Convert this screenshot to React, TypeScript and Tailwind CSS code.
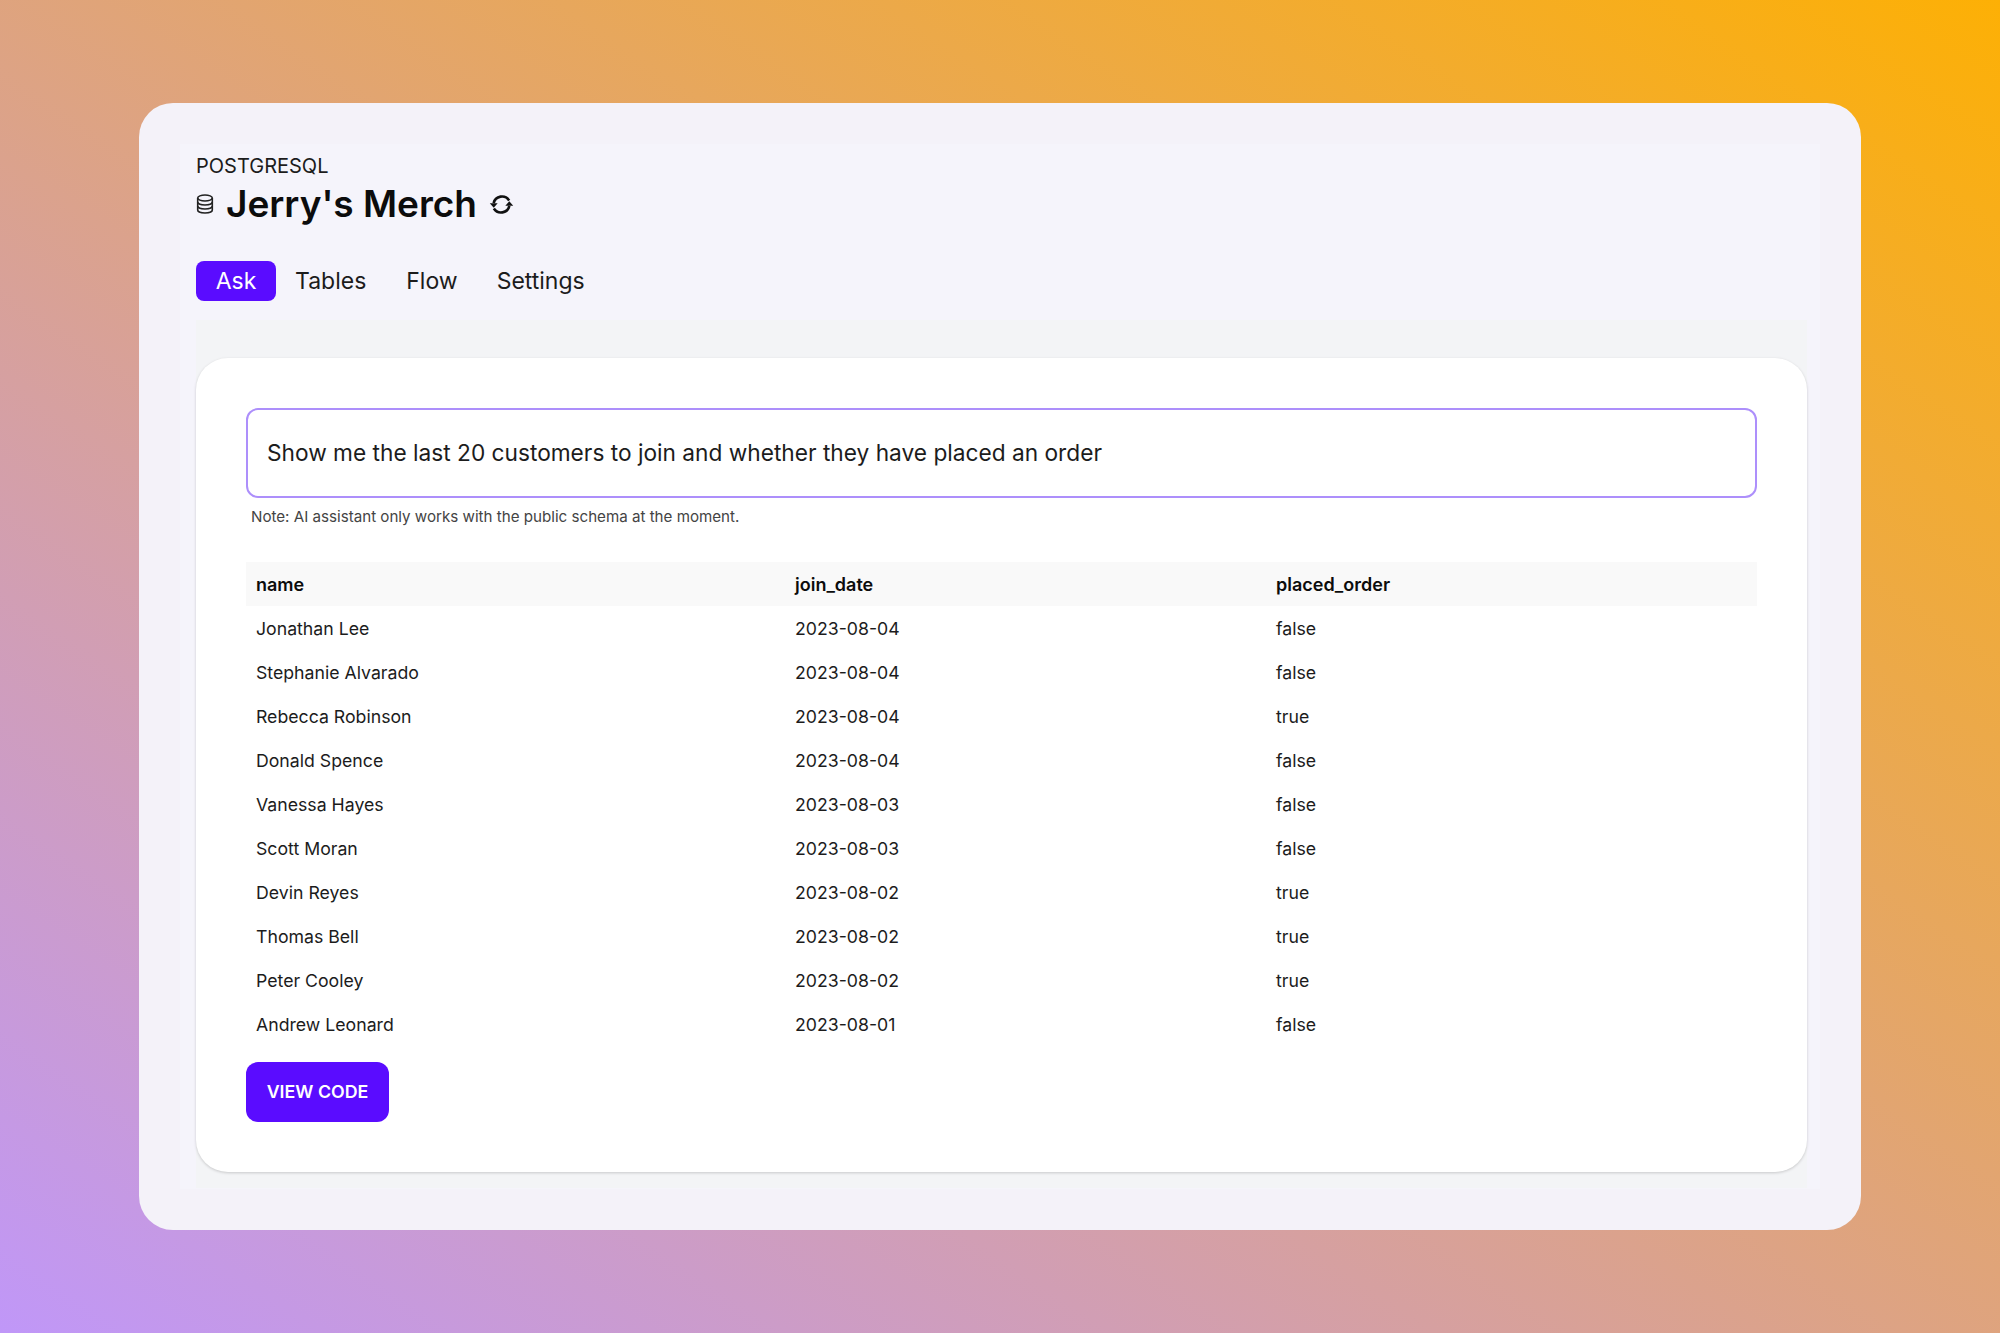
import React from "react";

const rows = [
  ["Jonathan Lee", "2023-08-04", "false"],
  ["Stephanie Alvarado", "2023-08-04", "false"],
  ["Rebecca Robinson", "2023-08-04", "true"],
  ["Donald Spence", "2023-08-04", "false"],
  ["Vanessa Hayes", "2023-08-03", "false"],
  ["Scott Moran", "2023-08-03", "false"],
  ["Devin Reyes", "2023-08-02", "true"],
  ["Thomas Bell", "2023-08-02", "true"],
  ["Peter Cooley", "2023-08-02", "true"],
  ["Andrew Leonard", "2023-08-01", "false"],
];

function DbIcon() {
  return (
    <svg width="18" height="20" viewBox="0 0 18 20" fill="none" stroke="#222" strokeWidth="1.6">
      <ellipse cx="9" cy="4" rx="7.3" ry="3" />
      <path d="M1.7 4v12c0 1.7 3.3 3 7.3 3s7.3-1.3 7.3-3V4" />
      <path d="M1.7 8c0 1.7 3.3 3 7.3 3s7.3-1.3 7.3-3" />
      <path d="M1.7 12c0 1.7 3.3 3 7.3 3s7.3-1.3 7.3-3" />
    </svg>
  );
}

function SyncIcon() {
  return (
    <svg width="27" height="27" viewBox="0 0 24 24" fill="none" stroke="#111" strokeWidth="2.3" strokeLinecap="butt" strokeLinejoin="round">
      <path d="M18.8 8.4A7.6 7.6 0 0 0 5 10.8" />
      <path d="M5.2 15.6A7.6 7.6 0 0 0 19 13.2" />
      <path d="M1.6 10.8h7L5.1 14.8z" fill="#111" stroke="none" />
      <path d="M15.4 13.2h7l-3.5-4z" fill="#111" stroke="none" />
    </svg>
  );
}

export default function App() {
  return (
    <div
      className="w-[2000px] h-[1333px] pt-[103px] pl-[139px] bg-[linear-gradient(to_top_right,#c097f8,#fdb005)] overflow-hidden"
      style={{ fontFamily: "Inter, sans-serif" }}
    >
      <div className="w-[1722px] h-[1127px] rounded-[34px] bg-[#f4f2f9] pt-[41px] pl-[41px]">
        <div className="w-[1640px] h-[1045px] bg-[#f5f4fb] pl-[16px] pt-[10px]">
          <div className="h-[24px] flex items-center text-[20px] leading-[24px] text-[#1c1c1c]">POSTGRESQL</div>
          <div className="flex items-center h-[50px] mt-[1px]">
            <DbIcon />
            <h1 className="ml-[12px] text-[37px] leading-[50px] font-semibold text-[#0c0c0c]">Jerry's Merch</h1>
            <div className="ml-[11px]"><SyncIcon /></div>
          </div>
          <div className="flex items-center mt-[32px] text-[23px] leading-[40px] text-[#1c1c1c]">
            <div className="w-[80px] h-[40px] rounded-[8px] bg-[#5a0cff] text-white flex items-center justify-center">Ask</div>
            <div className="pl-[19px] pr-[20px]">Tables</div>
            <div className="pl-[20px] pr-[19px]">Flow</div>
            <div className="px-[20px]">Settings</div>
          </div>
          <div className="w-[1611px] h-[868px] mt-[19px] bg-[#f3f4f6] pt-[38px]">
            <div className="h-[814px] rounded-[32px] bg-white shadow-[0_1px_3px_rgba(0,0,0,0.18)] pt-[50px] px-[50px]">
              <div className="h-[90px] rounded-[12px] border-[2px] border-[#ad8ffb] flex items-center pl-[19px] text-[22.7px] text-[#1c1c1c]">
                Show me the last 20 customers to join and whether they have placed an order
              </div>
              <p className="mt-[9px] ml-[5px] text-[15.15px] leading-[20px] text-[#444444]">
                Note: AI assistant only works with the public schema at the moment.
              </p>
              <div className="mt-[35px] text-[17.7px] leading-[24px] text-[#1c1c1c]">
                <div className="grid grid-cols-[539px_481px_1fr] h-[44px] items-center bg-[#f9f9f9] pl-[10px] pt-[1px] font-semibold text-[#0c0c0c] text-[18px]">
                  <div>name</div>
                  <div>join_date</div>
                  <div>placed_order</div>
                </div>
                {rows.map((r) => (
                  <div key={r[0]} className="grid grid-cols-[539px_481px_1fr] h-[44px] items-center pl-[10px] pt-[1px]">
                    <div>{r[0]}</div>
                    <div>{r[1]}</div>
                    <div>{r[2]}</div>
                  </div>
                ))}
              </div>
              <div className="mt-[16px] w-[143px] h-[60px] rounded-[12px] bg-[#5a0cff] text-white flex items-center justify-center text-[17.8px] font-semibold">
                VIEW CODE
              </div>
            </div>
          </div>
        </div>
      </div>
    </div>
  );
}
